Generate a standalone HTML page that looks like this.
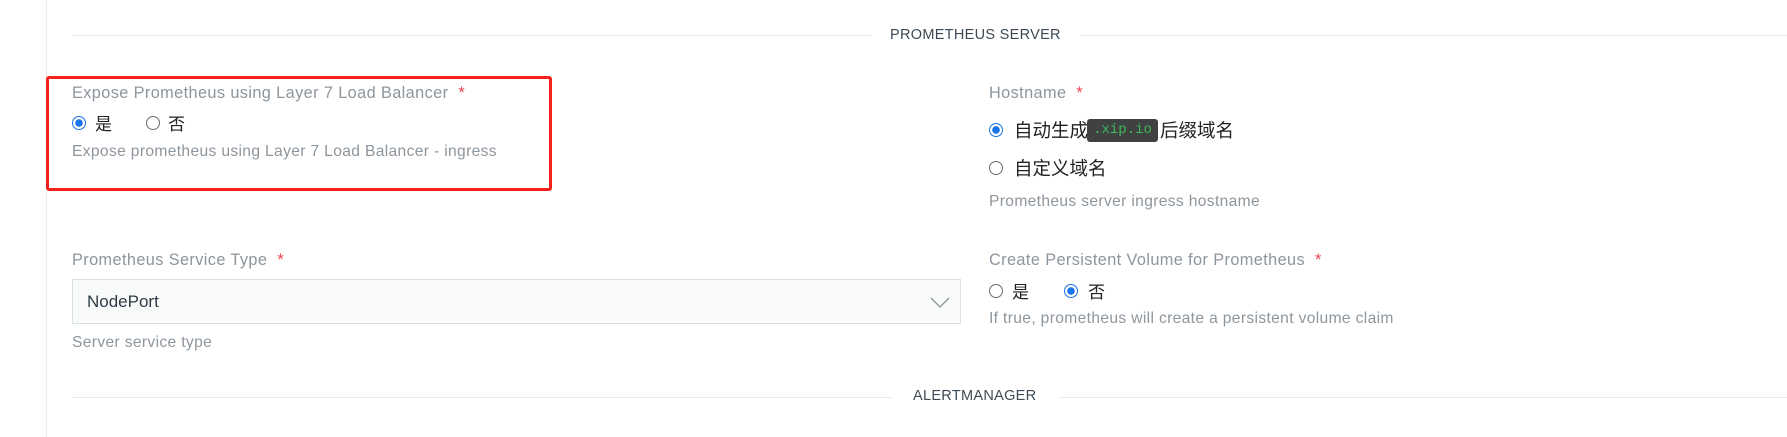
<!DOCTYPE html>
<html><head><meta charset="utf-8">
<style>
*{margin:0;padding:0;box-sizing:border-box}
html,body{width:1787px;height:437px;background:#fff;overflow:hidden}
body{position:relative;font-family:"Liberation Sans","Noto Sans CJK SC",sans-serif}
.a{position:absolute;white-space:nowrap}
.lbl{font-size:16.3px;color:#8d959d;line-height:20px;letter-spacing:0.4px}
.req{color:#f0414f;margin-left:10px}
.help{font-size:15.6px;color:#8d959d;line-height:20px;letter-spacing:0.35px}
.line{position:absolute;height:1px;background:#e8ecec}
.sec{font-size:14.5px;color:#3d4a55;line-height:20px;letter-spacing:0.3px}
.r{position:absolute;width:14px;height:14px;border-radius:50%;border:1.5px solid #6d6d6d;background:#fff}
.r.on{border:1.5px solid #1a73e8;background:radial-gradient(circle,#1a73e8 0 3.5px,#fff 4px)}
.cn{font-family:"Noto Sans CJK SC","Liberation Sans",sans-serif;color:#222;line-height:24px}
</style></head><body>
<div style="position:absolute;left:46px;top:0;width:1px;height:437px;background:#eceeee"></div>

<div class="line" style="left:72px;top:35px;width:799px"></div>
<div class="a sec" style="left:890px;top:25px">PROMETHEUS SERVER</div>
<div class="line" style="left:1081px;top:35px;width:706px"></div>

<div style="position:absolute;left:46px;top:76px;width:506px;height:115px;border:3px solid #f5221b;border-radius:3px"></div>

<div class="a lbl" style="left:72px;top:83px">Expose Prometheus using Layer 7 Load Balancer<span class="req">*</span></div>
<div class="r on" style="left:72px;top:116px"></div>
<div class="a cn" style="left:95px;top:111px;font-size:17px">是</div>
<div class="r" style="left:146px;top:116px"></div>
<div class="a cn" style="left:168px;top:111px;font-size:17px">否</div>
<div class="a help" style="left:72px;top:142px">Expose prometheus using Layer 7 Load Balancer - ingress</div>

<div class="a lbl" style="left:72px;top:250px">Prometheus Service Type<span class="req">*</span></div>
<div style="position:absolute;left:72px;top:279px;width:889px;height:45px;border:1px solid #d9e2e2;background:#f9fbfb"></div>
<div class="a" style="left:87px;top:291px;font-size:17px;color:#2d3a46;line-height:22px">NodePort</div>
<svg class="a" style="left:930px;top:297px" width="20" height="12" viewBox="0 0 20 12"><path d="M1 1 L10 10 L19 1" fill="none" stroke="#8c9396" stroke-width="1.3"/></svg>
<div class="a help" style="left:72px;top:333px">Server service type</div>

<div class="a lbl" style="left:989px;top:83px">Hostname<span class="req">*</span></div>
<div class="r on" style="left:989px;top:123px"></div>
<div class="a cn" style="left:1014px;top:118px;font-size:18.5px">自动生成</div>
<div class="a" style="left:1087px;top:119px;width:71px;height:23px;background:#404241;border-radius:3px;color:#3cb95b;font-family:'Liberation Mono',monospace;font-size:14px;line-height:23px;text-align:center">.xip.io</div>
<div class="a cn" style="left:1160px;top:118px;font-size:18.5px">后缀域名</div>
<div class="r" style="left:989px;top:161px"></div>
<div class="a cn" style="left:1014px;top:156px;font-size:18.5px">自定义域名</div>
<div class="a help" style="left:989px;top:192px">Prometheus server ingress hostname</div>

<div class="a lbl" style="left:989px;top:250px">Create Persistent Volume for Prometheus<span class="req">*</span></div>
<div class="r" style="left:989px;top:284px"></div>
<div class="a cn" style="left:1012px;top:279px;font-size:17px">是</div>
<div class="r on" style="left:1064px;top:284px"></div>
<div class="a cn" style="left:1088px;top:279px;font-size:17px">否</div>
<div class="a help" style="left:989px;top:309px">If true, prometheus will create a persistent volume claim</div>

<div class="line" style="left:72px;top:397px;width:821px"></div>
<div class="a sec" style="left:913px;top:386px">ALERTMANAGER</div>
<div class="line" style="left:1058px;top:397px;width:729px"></div>
</body></html>
